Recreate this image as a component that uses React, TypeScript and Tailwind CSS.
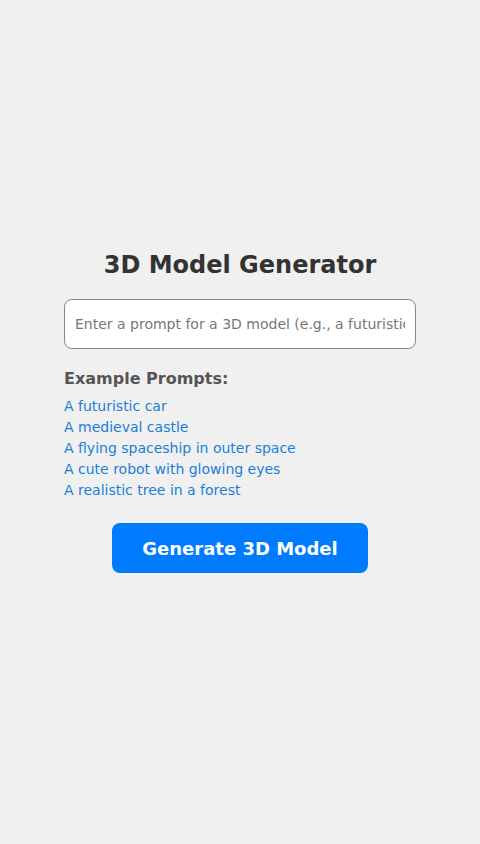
import { useState } from "react";

const prompts = [
  "A futuristic car",
  "A medieval castle",
  "A flying spaceship in outer space",
  "A cute robot with glowing eyes",
  "A realistic tree in a forest",
];

export default function App() {
  const [prompt, setPrompt] = useState("");

  return (
    <div className="min-h-screen bg-[#f0f0f0] flex flex-col items-center justify-center px-5 pt-5 pb-[40px] font-['DejaVu_Sans',sans-serif]">
      {/* Title */}
      <h1 className="text-[24px] leading-[28px] font-bold text-[#333] mb-5">
        3D Model Generator
      </h1>

      {/* Prompt input */}
      <input
        value={prompt}
        onChange={(e) => setPrompt(e.target.value)}
        placeholder="Enter a prompt for a 3D model (e.g., a futuristic car)"
        className="w-[80%] h-[50px] px-[10px] bg-white border border-[#888] rounded-[8px] text-[14px] text-[#333] placeholder:text-[#777] outline-none mb-5"
      />

      {/* Example prompts */}
      <div className="w-[80%] mb-[22px]">
        <h2 className="text-[16px] leading-[19px] font-bold text-[#555] mb-2">
          Example Prompts:
        </h2>
        {prompts.map((p) => (
          <button
            key={p}
            onClick={() => setPrompt(p)}
            className="block text-left text-[14px] leading-[21px] text-[#1a7fd9]"
          >
            {p}
          </button>
        ))}
      </div>

      {/* Generate */}
      <button className="w-[256px] h-[50px] bg-[#007bff] rounded-[8px] text-white text-[18px] font-bold">
        Generate 3D Model
      </button>
    </div>
  );
}
